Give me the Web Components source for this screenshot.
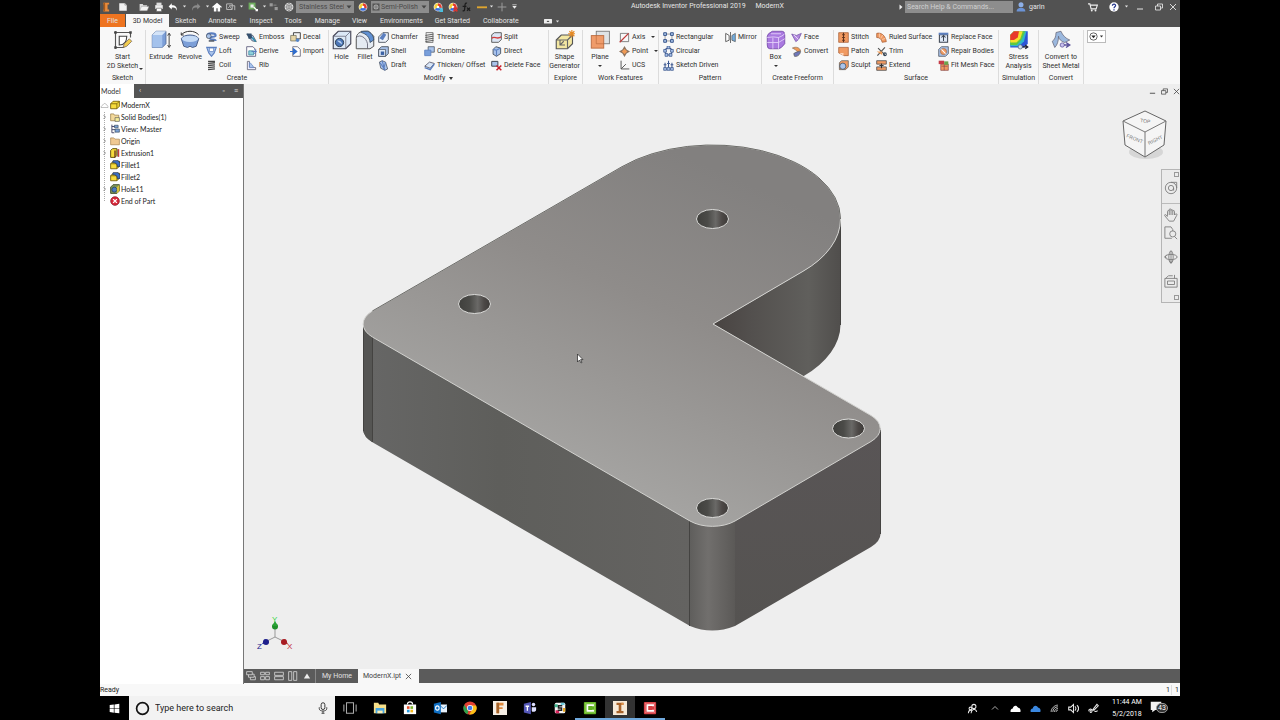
<!DOCTYPE html>
<html lang="en">
<head>
<meta charset="utf-8">
<title>Autodesk Inventor Professional 2019 - ModernX</title>
<style>
body{margin:0;background:#000;font-family:Roboto,"Noto Sans",sans-serif;font-size:7px;line-height:10px;color:#333}
</style>
</head>
<body>
<inventor-app></inventor-app>
<script>
/* Icon library: every drawing sits on a 16 by 16 grid. */
const B='#5b7fc0', L='#a9c3ea', K='#3c4450', O='#f09a62';
const wheel='<circle cx="8" cy="8" r="7" fill="#eee"/><path d="M8 8V2a6 6 0 0 1 5.2 9z" fill="#e33b2e"/><path d="M8 8l5.2 3a6 6 0 0 1-10.4 0z" fill="#3b6fe0"/><path d="M8 8L2.800 11A6 6 0 0 1 8 2z" fill="#f4cf3a"/><circle cx="8" cy="8" r="2" fill="#fff"/>';
const cubeY='<path d="M1 6l4-4h10v8l-4 4H1z" fill="#f7dc3c" stroke="#6b5600" stroke-width="1.300"/><path d="M1 6h10v8M11 6l4-4" fill="none" stroke="#6b5600" stroke-width="1.200"/>';
const cam=(c,a)=>`<rect x="1" y="1" width="14" height="14" rx="1" fill="${c}"/><rect x="2.500" y="2.500" width="11" height="11" fill="none" stroke="${a}" stroke-width=".8"/><path d="M11.500 6V4.800H5v6.400h6.500V10" fill="none" stroke="#fff" stroke-width="2"/>`;
const ICONS={
inv:'<path d="M4 1h9v3h-2.500v8H13v3H4v-3h2.500V4H4z" fill="#e98a3a"/><path d="M4 1h2.500v14H4z" fill="#a55a1d"/>',
file:'<path d="M2 2h9l3 3v9H2z" fill="#f2f2f2"/><path d="M11 2v3h3" fill="none" stroke="#888"/>',
open:'<path d="M1 13V3h5l1 2h6v2" fill="#ddd"/><path d="M4 7h12l-3 7H1z" fill="#f4f4f4" stroke="#888" stroke-width=".6"/>',
save:'<path d="M4 1h8v4H4z" fill="#ddd"/><rect x="2" y="5" width="12" height="6" fill="#eee"/><path d="M4 10h8v5H4z" fill="#fff" stroke="#666"/>',
undo:'<path d="M6 2L1 7l5 5V9c5-1 7 1 8 5 1-6-2-9-8-9z" fill="#fff"/>',
redo:'<path d="M10 2l5 5-5 5V9C5 8 3 10 2 14 1 8 4 5 10 5z" fill="#8b8b8b"/>',
home:'<path d="M8 1L0 8l1.500 1L3 8v7h4v-5h2v5h4V8l1.500 1L16 8z" fill="#fff"/>',
snap:'<path d="M1 3h9v9H1zM5 6h9v7" fill="none" stroke="#bbb" stroke-width="1.500"/><path d="M3 10l3-3 3 4" stroke="#ddd" fill="none"/>',
upd:'<rect x="1" y="1" width="11" height="11" fill="#6fae5f"/><rect x="4" y="4" width="5" height="5" fill="#eee"/><path d="M9 8l6 6M12 14h3v-3" stroke="#fff" stroke-width="1.800" fill="none"/>',
sel:'<rect x="1" y="2" width="5" height="5" fill="#9a9a9a"/><rect x="9" y="8" width="5" height="5" fill="#9a9a9a"/><path d="M7 5h5" stroke="#aaa"/>',
globe:'<circle cx="8" cy="8" r="7" fill="#e8e8e8"/><path d="M1 8h14M8 1v14M3 4c3 2 7 2 10 0M3 12c3-2 7-2 10 0M8 1C3 5 3 11 8 15c5-4 5-10 0-14" fill="none" stroke="#666" stroke-width=".9"/>',
wheel, wheela:wheel+'<path d="M10 9l5 5M15 10v5h-5" stroke="#4ac0e0" stroke-width="2.500" fill="none"/>',
wheelx:wheel+'<path d="M9 9l6 6M15 9l-6 6" stroke="#d8322c" stroke-width="2.500"/>',
fx:'<path d="M8 2c-4-2-3 5-4 11-1 2-2 1-3 1M1 7h6M8 9l5 5M13 9l-5 5" fill="none" stroke="#1c1c1c" stroke-width="2"/>',
dash:'<path d="M0 7h16v3H0z" fill="#dfa52f"/>', plus:'<path d="M8 1v14M1 8h14" stroke="#9a9a9a" stroke-width="1.600"/>',
cust:'<path d="M3 4h10" stroke="#eee" stroke-width="1.500"/><path d="M3 7h10l-5 6z" fill="#eee"/>',
tri:'<path d="M3 5h10l-5 6z" fill="currentColor"/>', play:'<path d="M4 1l8 7-8 7z" fill="#eee"/>',
swatch:'<rect x="1" y="1" width="14" height="14" fill="#555"/><circle cx="8" cy="8" r="5" fill="#aaa"/><path d="M4 8h8M8 4v8" stroke="#555"/>',
user:'<circle cx="8" cy="4.500" r="4" fill="#8db0e8"/><path d="M1 15c0-4 3-6 7-6s7 2 7 6z" fill="#6b93d6"/>',
cart:'<path d="M0 3h3l2 8h8l2-6H4" fill="none" stroke="#eee" stroke-width="1.800"/><circle cx="6" cy="13.500" r="1.500" fill="#eee"/><circle cx="12" cy="13.500" r="1.500" fill="#eee"/>',
help:'<circle cx="8" cy="8" r="7.500" fill="#fff"/><path d="M5.500 6c0-4 5.500-3 5 0-.3 1.800-2.500 1.800-2.500 4M8 11.500v2" fill="none" stroke="#23358c" stroke-width="2"/>',
min:'<path d="M2 12h12" stroke="currentColor" stroke-width="2"/>', rest:'<path d="M1 6h10v8H1zM5 6V2h10v8h-4" fill="none" stroke="currentColor" stroke-width="1.700"/>',
close:'<path d="M2 2l12 12M14 2L2 14" stroke="currentColor" stroke-width="1.800"/>',
media:'<rect x="0" y="4" width="16" height="9" rx="1" fill="#eee"/><path d="M5 10l3-3 3 3z" fill="#444"/>',
/* ribbon, large */
sketch:'<path d="M2 1v14M1 2h13M14 2v4M2 14h7" fill="none" stroke="#555" stroke-width=".9"/><path d="M1 1h2v2H1zM13 1h2v2h-2zM1 13h2v2H1z" fill="#444"/><path d="M5 5h6c0 4-2 7-6 7z" fill="#fff" stroke="#444" stroke-width=".9"/><path d="M8 14l1-3 4-4 2 2-4 4z" fill="#f1cc4e" stroke="#776655" stroke-width=".6"/>',
extrude:'<path d="M1 4l3-3h8v10l-3 3H1z" fill="#7c9fd8" stroke="#4c648f" stroke-width=".6"/><path d="M1 4h8v10H1z" fill="#a4c2ec"/><path d="M1 4l3-3h8L9 4z" fill="#d4e4f8"/><path d="M14.500 3v10M13.300 4.500l1.200-2 1.200 2M13.300 12l1.200 2 1.200-2" stroke="#333" stroke-width=".7" fill="none"/>',
revolve:'<path d="M1 7c2-4 12-4 14 0l-2 6-3 1-2-1-2 1-3-1z" fill="#7c9fd8" stroke="#40557e" stroke-width=".7"/><ellipse cx="8" cy="7" rx="6.500" ry="2.500" fill="#c4daf5"/><path d="M1 4c3-4 11-4 14 0M1 4V2M1 4h2" fill="none" stroke="#333" stroke-width=".8"/>',
hole:'<path d="M1 5l4-4h10v10l-4 4H1z" fill="#dce8f6" stroke="#444455" stroke-width=".9"/><path d="M1 5h10v10M11 5l4-4" fill="none" stroke="#666677" stroke-width=".6"/><circle cx="6" cy="10" r="3.300" fill="#4d77b8" stroke="#223344" stroke-width=".7"/><path d="M4 8.500a3 3 0 0 1 4 3z" fill="#bcd4f2"/>',
fillet:'<path d="M1 15V7c0-4 3-6 7-6h3l4 4v8l-3 2z" fill="#e4eaf2" stroke="#555" stroke-width=".8"/><path d="M5 1h5c3 1 5 4 5 7l-3 2C12 6 9 3 5 2z" fill="#5f8fd2" stroke="#334455" stroke-width=".6"/><path d="M1 6c3-3 8 0 9 5v4" fill="none" stroke="#666677" stroke-width=".7"/>',
shape:'<path d="M1 8l4-4h9v7l-4 4H1z" fill="#f3e7a2" stroke="#555" stroke-width=".9"/><path d="M1 8h9v7M10 8l4-4M4 8v4h4M4 12l3-3" fill="none" stroke="#666" stroke-width=".9"/><path d="M13.500 0v6M10.500 3h6M11.500 1l4 4M15.500 1l-4 4" stroke="#e58a24" stroke-width=".9"/>',
plane:'<rect x="5" y="1" width="10.500" height="10" fill="#dfe3e6" stroke="#777" stroke-width=".7"/><rect x="1" y="4.500" width="10" height="10" fill="#ef9b6a" stroke="#b8683c" stroke-width=".7"/><path d="M5 4.500V11h6" fill="none" stroke="#b8683c" stroke-width=".5"/>',
box:'<path d="M1 5q0-2 4-4h8q2 0 2 3v7q-3 4-5 4H3q-2 0-2-3z" fill="#aa79e0" stroke="#6b42a0" stroke-width=".6"/><path d="M1 6q5-1 9 0 3-1 5-3M10 6v9M1 10h9l5-3M5.500 6v9M4 3h8" stroke="#e4d0fa" stroke-width=".7" fill="none"/>',
metal:'<path d="M1 9C3 8 4 5 4 2l4-1c1 3 4 6 7 7l-4 2C8 9 6 7 6 5c0 4-1 7-3 9z" fill="#9bb8de" stroke="#666677" stroke-width=".6"/><path d="M8 12h6M12 10l3 2-3 2" stroke="#59509a" stroke-width="1.200" fill="none"/><circle cx="9" cy="12" r="1.700" fill="#c9c1ee" stroke="#59509a" stroke-width=".6"/>',
stress:'<path d="M1 4l3-3h11v10l-3 3H1z" fill="#2d55d6"/><path d="M1 4l3-3h10l-2 8-4 4H1z" fill="#2fb7c9"/><path d="M1 4l3-3h9l-3 7-4 4H1z" fill="#5fc940"/><path d="M1 4l3-3h7L9 7l-3 3H1z" fill="#f5e12c"/><path d="M1 4l3-3h4L7 6 4 8H1z" fill="#e8392c"/><path d="M10 13.500h5M13 12l2 1.500-2 1.500" stroke="#222233" fill="none"/><circle cx="9" cy="13.500" r="1.700" fill="#ccddee" stroke="#556677" stroke-width=".6"/>',
/* ribbon, small */
sweep:`<path d="M2 5c0-4 12-4 12 0 0 3-8 1-8 4s8 1 8 4" fill="none" stroke="${B}" stroke-width="3"/><circle cx="4" cy="6" r="3.500" fill="${L}" stroke="${K}"/><path d="M4 13h8" stroke="${K}" stroke-width="2"/>`,
loft:`<path d="M1 2h14l-3 8-4 5-4-5z" fill="${L}" stroke="${B}" stroke-width="1.500"/><path d="M5 3h6v5H5z" fill="#fff" stroke="${B}"/>`,
coil:'<path d="M3 2h10M3 5l10-1M3 8l10-1M3 11l10-1M3 14l10-1" stroke="#444" stroke-width="2"/>',
emboss:`<path d="M1 3l9 2 5 9-6-1z" fill="${L}" stroke="${K}"/><path d="M1 2h7l1 7-5 1z" fill="#35506e"/><path d="M9 8l5 6" stroke="#2a8cab" stroke-width="2"/>`,
derive:`<path d="M1 1h9l4 4v10H1z" fill="#fff" stroke="#555577" stroke-width="1.200"/><path d="M4 7h7v6H4z" fill="#8ed0da" stroke="#2b7b98"/><path d="M8 8h7M12 5l3 3-3 3" fill="none" stroke="${B}" stroke-width="1.500"/>`,
rib:`<path d="M2 2h3v8l9 1v3H2z" fill="#eeeeff" stroke="#666677" stroke-width="1.200"/><path d="M5 4c3 1 5 4 6 7H5z" fill="${L}" stroke="${B}"/>`,
decal:'<path d="M5 1h10v9H5z" fill="#f3f3f3" stroke="#444" stroke-width="1.400"/><path d="M1 5h8v8H1z" fill="#e6d5a5" stroke="#666655"/><circle cx="11" cy="12" r="2.500" fill="#5485c8"/>',
import:'<path d="M4 1h7l4 4v10H4z" fill="#fff" stroke="#666677" stroke-width="1.200"/><path d="M0 8h8M5 4l5 4-5 4z" fill="#2f6ccc" stroke="#2f6ccc" stroke-width="1.500"/>',
chamfer:`<path d="M1 7l6-6h8v10l-4 4H1z" fill="#eef3fa" stroke="${K}" stroke-width="1.200"/><path d="M2 9l6-8 4 3-5 8z" fill="${B}"/>`,
shell:`<path d="M1 5l4-4h10v10l-4 4H1z" fill="${L}" stroke="${K}" stroke-width="1.200"/><path d="M1 5h10v10H1z" fill="#dfe9f7" stroke="${K}"/><path d="M4 8h5v5H4z" fill="#3b62a5"/>`,
draft:`<path d="M2 3l4-2 5 2 3 10-4 2-6-3z" fill="${L}" stroke="${K}"/><path d="M6 1l4 14M3 4l7 10M11 3l-3 11" stroke="${B}" stroke-width="1.500"/>`,
thread:'<rect x="3" y="1" width="10" height="14" fill="#eee" stroke="#555"/><path d="M2 5l12-2M2 8l12-2M2 11l12-2M2 14l12-2" stroke="#555" stroke-width="1.300"/>',
combine:`<path d="M6 1h9v8H6z" fill="${L}" stroke="${K}"/><path d="M1 6h9v8H1z" fill="#789fdb" stroke="${B}" stroke-width="1.200"/>`,
thicken:`<path d="M1 9l7-6 7 2-6 7z" fill="#d8e6f8" stroke="#555566" stroke-width="1.200"/><path d="M1 11l8 3 6-8" fill="none" stroke="${B}" stroke-width="2"/>`,
split:'<path d="M1 4l4-3h10v10l-4 4H1z" fill="#dce6f4" stroke="#444" stroke-width="1.200"/><path d="M1 9c5-4 7 3 14-2" fill="none" stroke="#d33b3b" stroke-width="2"/>',
direct:`<path d="M3 5l4-4 7 2v8l-6 4-5-3z" fill="${L}" stroke="${K}" stroke-width="1.200"/><path d="M8 5v9M3 5l5 1 6-3" stroke="${B}" fill="none" stroke-width="1.500"/>`,
delface:`<path d="M1 2h9v7H1z" fill="${L}" stroke="${K}" stroke-width="1.400"/><path d="M8 8l7 7M15 8l-7 7" stroke="#c81f2b" stroke-width="2.200"/>`,
axis:'<path d="M2 2h12v12H2z" fill="none" stroke="#555"/><path d="M1 15L14 2" stroke="#c03a3a" stroke-width="1.800"/>',
point:'<path d="M8 0l3 5 5 3-5 3-3 5-3-5-5-3 5-3z" fill="#8d735f"/><path d="M8 4l4 4-4 4-4-4z" fill="#ef9a55"/>',
ucs:'<path d="M3 1v12h12M3 13l7-7" fill="none" stroke="#555" stroke-width="1.400"/>',
rect:`<path d="M3 3h10v10H3z" fill="none" stroke="#777"/><path d="M1 1h4v4H1zM11 1h4v4h-4zM1 11h4v4H1zM11 11h4v4h-4z" fill="${L}" stroke="#2e4c84" stroke-width="1.300"/>`,
circ:`<circle cx="8" cy="8" r="5" fill="none" stroke="#3b5790" stroke-width="1.500"/><path d="M6 0h4v4H6zM1 5h4v4H1zM11 5h4v4h-4zM3 11h4v4H3zM9 11h4v4H9z" fill="${L}" stroke="#2e4c84"/>`,
skd:`<path d="M3 4v8M8 1v10M13 4v8M1 7h4M6 5h4M11 7h4" stroke="#3b5790" stroke-width="1.500"/><path d="M1 11h4v4H1zM6 11h4v4H6zM11 11h4v4h-4z" fill="${L}" stroke="#2e4c84"/>`,
mirror:'<path d="M1 2l5 3v7l-5 2z" fill="#fff" stroke="#555" stroke-width="1.300"/><path d="M15 2l-5 3v7l5 2z" fill="#74aee0" stroke="#555"/><path d="M8 0v16" stroke="#333"/>',
face:'<path d="M1 3l7 2 7-3-4 9-4 3z" fill="#b48ae0" stroke="#6b4aa0"/><path d="M4 4l7 7" stroke="#fff"/>',
conv:'<path d="M2 3c6-3 11 0 12 4l-5 1-3-3z" fill="#ef9a55" stroke="#8a6a55"/><path d="M4 11c4-3 8-3 10-3-1 5-5 8-9 7z" fill="#6f77b9" stroke="#555"/>',
stitch:`<path d="M1 1h14v14H1z" fill="${O}" stroke="#a0542c"/><path d="M8 1v14M6 4h4M6 8h4M6 12h4" stroke="#5d321c" stroke-width="1.500"/>`,
patch:`<path d="M1 2h14v12h-6L1 10z" fill="${O}" stroke="#a0542c"/><path d="M2 10l6 0v4" fill="#fbd6bd"/>`,
sculpt:`<path d="M2 4l3-3h10v9l-4 4H2z" fill="${O}" stroke="#555"/><circle cx="7" cy="9" r="4.500" fill="${L}" stroke="#334455"/>`,
ruled:`<path d="M1 2c7-2 13 4 14 12l-6 1C8 10 5 8 1 8z" fill="${O}" stroke="#a0542c"/><path d="M5 2v6M10 4l-3 5M14 9l-5 2" stroke="#fbd6bd"/>`,
trim:'<path d="M2 14L13 2M3 3l10 10" stroke="#555" stroke-width="1.700"/><path d="M1 8h8v5z" fill="#ef9a55"/><circle cx="13" cy="12" r="2" fill="none" stroke="#334455" stroke-width="1.500"/>',
extend:`<path d="M1 1h14v5H1zM1 10h14v5H1z" fill="${O}" stroke="#555" stroke-width="1.200"/><path d="M8 5v7M5 8h6" stroke="#333" stroke-width="1.500"/>`,
repface:`<path d="M2 4h12v11H2z" fill="#dfe9f7" stroke="${K}" stroke-width="1.500"/><path d="M1 1h14v3H1z" fill="${B}"/><path d="M8 6v7M5 8l3-3 3 3" fill="none" stroke="${K}" stroke-width="1.500"/>`,
repbody:`<path d="M1 5l4-4h10v10l-4 4H1z" fill="${L}" stroke="${K}"/><circle cx="8" cy="8" r="4.500" fill="${O}" stroke="#996644"/><path d="M5 5l6 6" stroke="#fff" stroke-width="1.500"/>`,
fit:`<path d="M4 6h11v9H4z" fill="${O}" stroke="#884444"/><path d="M1 1h8v5H1z" fill="#c63c48"/><path d="M9 2h6v5H9z" fill="#6aa34b"/><path d="M5 9h9M9 7v8" stroke="#884444"/>`,
down:'<circle cx="8" cy="8" r="6.500" fill="none" stroke="#333" stroke-width="1.300"/><path d="M4 6h8l-4 5z" fill="#222"/>',
/* browser */
cloud:'<path d="M1 13c0-3 2-4 4-5 2-5 6-3 7 0 3 1 3 3 3 5z" fill="#fff" stroke="#888"/>',
cubey:cubeY, solids:'<path d="M1 3h5l1 2h7v9H1z" fill="#f3d99b" stroke="#8a6c30"/><path d="M8 9h7v6H8z" fill="#f7ee9a" stroke="#555"/>',
view:'<path d="M3 1v13M3 4h5M3 9h5M3 14h4" stroke="#444466" stroke-width="1.500"/><path d="M7 2h6v4H7zM8 8h7v5H8z" fill="#7aa2d8" stroke="#334455"/>',
folder:'<path d="M1 3h5l2 2h7v9H1z" fill="#f0c993" stroke="#a07840"/>',
extr:'<path d="M1 4l3-3h7v11l-3 3H1z" fill="#f7dc3c" stroke="#554400" stroke-width="1.400"/><path d="M8 4v11M13 2v12" stroke="#5b2a20" stroke-width="2"/><path d="M14 2v12" stroke="#dd3333" stroke-width="1.500"/>',
fillt:cubeY+'<path d="M5 1h8l3 4v5l-4 1C12 6 9 4 4 4z" fill="#3d6fc2" stroke="#1c2a4c"/>',
holet:'<path d="M1 5l4-4h10v10l-4 4H1z" fill="#7e965b" stroke="#32401c" stroke-width="1.300"/><circle cx="7" cy="9" r="4" fill="#487bc0" stroke="#1b3050"/><path d="M11 5l4-4v10l-4 4z" fill="#d6c13a"/>',
end:'<circle cx="8" cy="8" r="7" fill="#d8283a" stroke="#7c1420"/><path d="M5 5l6 6M11 5l-6 6" stroke="#fff" stroke-width="2.200"/>',
chev:'<path d="M6 4l4 4-4 4" fill="none" stroke="#777" stroke-width="1.500"/>',
/* navigation bar */
steer:'<circle cx="8" cy="8" r="6.500"/><circle cx="8" cy="8" r="3"/><path d="M8 1.500h6.500V8M11 8v3"/>',
pan:'<path d="M4 9V4c0-1.500 2-1.500 2 0V2c0-1.500 2-1.500 2 0v1c0-1.500 2-1.500 2 0v1c0-1.500 2-1.500 2 0v4l1-1c1-1 2.500 0 1.500 1.500L11 15H6L1 9c-1-1.500 1-2 1.500-1L4 10M6 4v4M8 3v5M10 4v4"/>',
zoomi:'<path d="M1 1h7l2 3v2M1 1v13h8"/><circle cx="10" cy="9" r="3.500"/><path d="M12 12l3 3"/>',
orbit:'<ellipse cx="8" cy="8" rx="7" ry="3"/><ellipse cx="8" cy="8" rx="2.500" ry="7"/><path d="M8 1v14M6 12l2 3 2-3M3 9l-2-1 2-2"/>',
look:'<path d="M1 5h14v10H1zM4 8h8v4H4zM2 5l3-3h5M12 1v4"/>',
/* document bar */
cas:'<path d="M1 1h9v5H1zM4 6v4h9V5h-3M7 10v4h8V9h-2" />', grid:'<path d="M1 2h6v4H1zM9 2h6v4H9zM1 9h6v5H1zM9 9h6v5H9z"/>',
rows:'<path d="M1 2h14v5H1zM1 9h14v5H1z"/>', cols:'<path d="M1 1h5v14H1zM9 1h5v14H9z"/>', up:'<path d="M3 12h10L8 4z" fill="#eee" stroke="none"/>',
/* taskbar */
win:'<path d="M1 3l6-1v5.500H1zM8 2l7-1v6.500H8zM1 8.500h6V14l-6-1zM8 8.500h7V15l-7-1z" fill="#fff"/>',
ring:'<circle cx="8" cy="8" r="6.300" fill="none" stroke="#111" stroke-width="1.800"/>',
mic:'<rect x="5.500" y="1" width="5" height="9" rx="2.500" fill="none" stroke="#333" stroke-width="1.300"/><path d="M3 7v2c0 4 10 4 10 0V7M8 12v3M6 15h4" fill="none" stroke="#333" stroke-width="1.200"/>',
task:'<path d="M4 2h8v12H4zM1 4v8M15 4v8" fill="none" stroke="#aaa" stroke-width="1.200"/>',
expl:'<path d="M1 2h5l1 2h8v10H1z" fill="#f7e08a"/><path d="M3 8h10v6H3z" fill="#49a7e3"/><path d="M5 11h6v3H5z" fill="#fbeeb4"/>',
store:'<path d="M5 4c0-4 6-4 6 0" fill="none" stroke="#fff" stroke-width="1.300"/><path d="M1 4h14v11H1z" fill="#fff"/><path d="M4.500 6h3v3h-3z" fill="#e6502c"/><path d="M8.500 6h3v3h-3z" fill="#7cb32d"/><path d="M4.500 10h3v3h-3z" fill="#2a9de0"/><path d="M8.500 10h3v3h-3z" fill="#f5b91d"/>',
outl:'<path d="M8 4h8v9H8z" fill="#e7f1fb"/><path d="M8 5l4 4 4-4" fill="none" stroke="#1670bd"/><path d="M1 3l8-2v14l-8-2z" fill="#0f6fc4"/><ellipse cx="5" cy="8" rx="2" ry="2.500" fill="none" stroke="#fff" stroke-width="1.300"/>',
chrome:'<circle cx="8" cy="8" r="7.500" fill="#e34133"/><path d="M1.500 4.300L6 12l-1 3A7.500 7.500 0 0 1 1.500 4.300z" fill="#2ba24c"/><path d="M15 5a7.500 7.500 0 0 1-8 10.400L11 9l-1-4z" fill="#fbc116"/><circle cx="8" cy="8" r="3.500" fill="#fff"/><circle cx="8" cy="8" r="2.700" fill="#3f7de8"/>',
fusion:'<rect x="0" y="0" width="16" height="16" fill="#f5eee5"/><path d="M4 2h8v3H7v2h4v2H7v5H4z" fill="#e08a3e"/><path d="M4 2h3v12H4z" fill="#a4632b"/>',
teams:'<path d="M1 3l8-2v14l-8-2z" fill="#5558b8"/><path d="M3 6h4M5 6v5" stroke="#fff" stroke-width="1.500"/><circle cx="12" cy="4" r="2" fill="#dfe0ff"/><path d="M10 7h5v3c0 3-5 3-5 1z" fill="#dfe0ff"/>',
slack:'<rect x="1" y="1" width="14" height="14" rx="2" fill="#f4f4f4"/><path d="M1 3h4v4H1z" fill="#3eb890"/><path d="M9 1h5v3H9z" fill="#6ecadc"/><path d="M12 8h3v5h-3z" fill="#e9a820"/><path d="M2 11h5v4H2z" fill="#d9245c"/><path d="M11 5H6v3h4v3H5" fill="none" stroke="#222" stroke-width="2"/>',
camg:cam('#5faf1f','#9ad85f'), camr:cam('#d43a3f','#f0868a'),
invt:'<rect width="16" height="16" fill="#f7ead8"/><path d="M4 2h8v2.500h-2.500v7H12V14H4v-2.500h2.500v-7H4z" fill="#a8632b"/><path d="M9.500 2H12v2.500H9.500z" fill="#e4954c"/>',
people:'<circle cx="10" cy="5" r="3"/><path d="M2 15c0-3 2-5 5-5M6 15c0-4 3-6 5-6 2 1 3 2 3 4"/><circle cx="5" cy="8" r="2"/>',
caret:'<path d="M2 11l6-6 6 6"/>', cloudw:'<path d="M1 13c-1-3 1-5 3-5 1-5 6-5 8-1 3 0 4 4 3 6z" fill="#fff" stroke="none"/>',
cloudb:'<path d="M1 13c-1-3 1-5 3-5 1-5 6-5 8-1 3 0 4 4 3 6z" fill="#3b88e0" stroke="none"/>',
wifi:'<path d="M2 14C2 8 8 2 14 2M5 14c0-5 4-9 9-9M8 14c0-3 3-6 6-6M11 14c0-2 1-3 3-3"/>',
vol:'<path d="M1 6h3l4-4v12l-4-4H1zM10 5c2 2 2 4 0 6M13 3c3 3 3 7 0 10"/>',
pen:'<path d="M9 7l4-5 2 2-5 5-3 1zM1 12c0-4 5-4 5-1s-3 4-3 1 4-3 7 0c2 1 3 0 4-1"/>',
note:'<path d="M1 1h14v11H7l-4 3v-3H1z" fill="#f2f2f2"/>'
};
const group=(names,attrs)=>{for(const n of names)ICONS[n]=`<g fill="none" ${attrs}>${ICONS[n]}</g>`};
group(['steer','pan','zoomi','orbit','look'],'stroke="#7b7b7b"');
group(['cas','grid','rows','cols','up'],'stroke="#d8d8d8" stroke-width="1.300"');
group(['people','caret','wifi','vol','pen','cloudw','cloudb'],'stroke="#e6e6e6" stroke-width="1.500"');

/* Registers an element from its template; setup fills the clone before it is attached. */
function define(name,html,setup){
  const t=document.createElement('template');t.innerHTML=html;
  customElements.define(name,class extends HTMLElement{
    connectedCallback(){
      if(this.shadowRoot)return;
      const c=t.content.cloneNode(true);
      if(setup)setup(this,c);
      this.attachShadow({mode:'open'}).append(c);
    }
  });
}
define('ui-icon','<style>:host{display:block;flex:none;width:var(--icon,10px);height:var(--icon,10px)}svg{display:block;width:100%;height:100%}</style><svg viewBox="0 0 16 16" aria-hidden="true"></svg>',
  (h,r)=>{r.querySelector('svg').innerHTML=ICONS[h.getAttribute('name')]||''});

const BTN='button{font:inherit;color:inherit;background:none;border:0;padding:0;margin:0;white-space:nowrap}';
/* Icon-only button; size and width come from custom properties. */
define('icon-button',`<style>:host{display:block;flex:none}${BTN}button{display:flex;align-items:center;justify-content:center;width:var(--cell,15px);height:100%}</style><button><ui-icon></ui-icon></button>`,
  (h,r)=>{r.querySelector('ui-icon').setAttribute('name',h.getAttribute('icon'));r.querySelector('button').setAttribute('aria-label',h.getAttribute('hint')||h.getAttribute('icon'))});
define('tool-large',`<style>:host{display:block}${BTN}button{display:flex;flex-direction:column;align-items:center;width:100%;--icon:20px;line-height:9px;position:relative}span{display:block;text-align:center;margin-top:3px}
:host([drop]) button{padding-bottom:6px}:host([drop]) button::after,:host([side]) button::after{content:"";position:absolute;bottom:1px;border:2px solid transparent;border-top-color:#333;border-bottom:0}:host([side]) button::after{right:2px}</style><button><ui-icon></ui-icon><span><slot></slot></span></button>`,
  (h,r)=>r.querySelector('ui-icon').setAttribute('name',h.getAttribute('icon')));
define('tool-small',`<style>:host{display:block;height:14px;padding-left:2px}${BTN}button{display:flex;align-items:center;gap:2px;height:14px;--icon:11px}:host([drop]) button::after{content:"";margin-left:4px;border:2px solid transparent;border-top-color:#333;border-bottom:0}</style><button><ui-icon></ui-icon><slot></slot></button>`,
  (h,r)=>r.querySelector('ui-icon').setAttribute('name',h.getAttribute('icon')));
define('ribbon-panel',`<style>:host{display:flex;flex-direction:column;box-sizing:border-box;border-right:1px solid #dcdcdc;flex:none}
.b{display:grid;grid-template-columns:var(--cols);height:42px;grid-auto-flow:column;grid-template-rows:14px 14px 14px;padding-left:var(--lead,0px)}::slotted(tool-large){grid-row:1/4}
h2{margin:0;font:inherit;line-height:12px;text-align:center;white-space:nowrap}:host([drop]) h2::after{content:"";display:inline-block;vertical-align:middle;margin-left:4px;border:2px solid transparent;border-top:3px solid #333;border-bottom:0}</style><div class="b"><slot></slot></div><h2></h2>`,
  (h,r)=>r.querySelector('h2').textContent=h.getAttribute('label'));

define('title-bar',`<style>
:host{display:grid;grid-template-columns:auto 1fr auto;height:13px;background:#525252;color:#e6e6e6}
.q,.r{display:flex;align-items:center;--icon:10px}.q{width:421px}
.q icon-button{height:12px}.d{width:5px;--cell:5px;--icon:5px}
select{appearance:none;font:inherit;color:#4a4a4a;background:#8d8d8d;border:0;height:12px;margin:0;min-width:0;width:100%;text-overflow:clip;padding:0 10px 0 3px}
label{display:block;position:relative;width:58px;height:12px;overflow:hidden;margin:0 1px 0 0}label.s select{padding-left:10px}
label ui-icon{position:absolute;top:2px;--icon:8px}label ui-icon.a{right:1px;color:#444}label ui-icon.w{left:1px}
h1{margin:0 0 0 110px;font:inherit;line-height:13px;white-space:nowrap}h1 span{margin-left:8px}
.r input{font:inherit;box-sizing:border-box;width:108px;height:12px;border:0;padding:0 2px;background:#8d8d8d;color:#ddd}.r input::placeholder{color:#d0d0d0;opacity:1}
.u{display:flex;align-items:center;width:66px;gap:3px;padding-left:3px}
</style>
<nav class="q" aria-label="Quick access">
<icon-button icon="inv" style="--cell:12px"></icon-button><icon-button icon="file" style="--cell:22px"></icon-button>
<icon-button icon="open" style="--cell:20px"></icon-button><icon-button icon="save" style="--cell:10px"></icon-button>
<icon-button icon="undo" style="--cell:18px"></icon-button><icon-button icon="tri" class="d"></icon-button>
<icon-button icon="redo" style="--cell:18px"></icon-button><icon-button icon="tri" class="d"></icon-button>
<icon-button icon="home" style="--cell:13px"></icon-button><icon-button icon="snap" style="--cell:16px"></icon-button><icon-button icon="tri" class="d"></icon-button>
<icon-button icon="upd" style="--cell:18px"></icon-button><icon-button icon="tri" class="d"></icon-button>
<icon-button icon="sel" style="--cell:14px"></icon-button><icon-button icon="globe" style="--cell:15px"></icon-button>
<label><select aria-label="Material"><option>Stainless Steel</option></select><ui-icon class="a" name="tri"></ui-icon></label>
<icon-button icon="wheel" style="--cell:16px"></icon-button>
<label class="s"><ui-icon class="w" name="swatch"></ui-icon><select aria-label="Appearance"><option>Semi-Polish</option></select><ui-icon class="a" name="tri"></ui-icon></label>
<icon-button icon="wheela" style="--cell:15px"></icon-button><icon-button icon="wheelx" style="--cell:15px"></icon-button><icon-button icon="fx" style="--cell:14px"></icon-button>
<icon-button icon="dash" style="--cell:15px"></icon-button><icon-button icon="tri" class="d"></icon-button><icon-button icon="plus" style="--cell:15px"></icon-button><icon-button icon="cust" style="--icon:7px;--cell:11px"></icon-button>
</nav>
<h1>Autodesk Inventor Professional 2019 <span>ModernX</span></h1>
<div class="r"><icon-button icon="play" hint="Expand" style="--icon:6px;--cell:9px"></icon-button>
<input type="search" aria-label="Search help" placeholder="Search Help &amp; Commands...">
<div class="u"><ui-icon name="user"></ui-icon>garin</div><icon-button icon="cart" style="--cell:22px"></icon-button><icon-button icon="help" style="--cell:20px"></icon-button><icon-button icon="tri" class="d"></icon-button>
<icon-button icon="min" style="--icon:8px;--cell:22px"></icon-button><icon-button icon="rest" style="--icon:8px"></icon-button><icon-button icon="close" style="--icon:8px;--cell:14px"></icon-button></div>`);

define('ribbon-tabs',`<style>:host{display:flex;height:14px;background:#525252;color:#e2e2e2;align-items:flex-end}${BTN}
button{padding:1px 6px 0;line-height:12px}button:nth-of-type(2n+5){padding-left:7px}.f{width:25px;padding:1px 0 0;background:#ee7420;margin-right:1px}.on{background:#f8f8f8;color:#333;width:43px;padding:1px 0 0}
.m{margin-left:16px;--cell:14px;--icon:8px;height:12px}.d{--cell:6px;--icon:5px;height:12px}</style>
<button class="f">File</button><button class="on">3D Model</button><button>Sketch</button><button>Annotate</button><button>Inspect</button><button>Tools</button><button>Manage</button><button>View</button><button>Environments</button><button>Get Started</button><button>Collaborate</button><icon-button class="m" icon="media"></icon-button><icon-button class="d" icon="tri"></icon-button>`);

define('ribbon-bar',`<style>:host{display:flex;height:54px;padding-top:3px;background:#f8f8f8;color:#303030;overflow:hidden}
.x{display:flex;align-items:center;height:13px;width:19px;margin-left:3px;box-sizing:border-box;border:1px solid #bbb;background:#fff;--cell:11px;--icon:9px}.x .t{--cell:5px;--icon:5px}</style>
<ribbon-panel label="Sketch" style="width:46px;--cols:1fr"><tool-large icon="sketch" side>Start<br>2D Sketch</tool-large></ribbon-panel>
<ribbon-panel label="Create" style="width:183px;--cols:30px 28px 40px 44px 38px"><tool-large icon="extrude">Extrude</tool-large><tool-large icon="revolve">Revolve</tool-large>
<tool-small icon="sweep">Sweep</tool-small><tool-small icon="loft">Loft</tool-small><tool-small icon="coil">Coil</tool-small>
<tool-small icon="emboss">Emboss</tool-small><tool-small icon="derive">Derive</tool-small><tool-small icon="rib">Rib</tool-small>
<tool-small icon="decal">Decal</tool-small><tool-small icon="import">Import</tool-small></ribbon-panel>
<ribbon-panel label="Modify" drop style="width:220px;--cols:25px 22px 46px 67px 58px"><tool-large icon="hole">Hole</tool-large><tool-large icon="fillet">Fillet</tool-large>
<tool-small icon="chamfer">Chamfer</tool-small><tool-small icon="shell">Shell</tool-small><tool-small icon="draft">Draft</tool-small>
<tool-small icon="thread">Thread</tool-small><tool-small icon="combine">Combine</tool-small><tool-small icon="thicken">Thicken/ Offset</tool-small>
<tool-small icon="split">Split</tool-small><tool-small icon="direct">Direct</tool-small><tool-small icon="delface">Delete Face</tool-small></ribbon-panel>
<ribbon-panel label="Explore" style="width:34px;--cols:31px"><tool-large icon="shape">Shape<br>Generator</tool-large></ribbon-panel>
<ribbon-panel label="Work Features" style="width:76px;--cols:34px 40px"><tool-large icon="plane" drop>Plane</tool-large>
<tool-small icon="axis" drop>Axis</tool-small><tool-small icon="point" drop>Point</tool-small><tool-small icon="ucs">UCS</tool-small></ribbon-panel>
<ribbon-panel label="Pattern" style="width:103px;--lead:2px;--cols:62px 37px"><tool-small icon="rect">Rectangular</tool-small><tool-small icon="circ">Circular</tool-small><tool-small icon="skd">Sketch Driven</tool-small><tool-small icon="mirror">Mirror</tool-small></ribbon-panel>
<ribbon-panel label="Create Freeform" style="width:72px;--cols:27px 42px"><tool-large icon="box" drop>Box</tool-large><tool-small icon="face">Face</tool-small><tool-small icon="conv">Convert</tool-small></ribbon-panel>
<ribbon-panel label="Surface" style="width:165px;--lead:2px;--cols:38px 62px 60px"><tool-small icon="stitch">Stitch</tool-small><tool-small icon="patch">Patch</tool-small><tool-small icon="sculpt">Sculpt</tool-small>
<tool-small icon="ruled">Ruled Surface</tool-small><tool-small icon="trim">Trim</tool-small><tool-small icon="extend">Extend</tool-small>
<tool-small icon="repface">Replace Face</tool-small><tool-small icon="repbody">Repair Bodies</tool-small><tool-small icon="fit">Fit Mesh Face</tool-small></ribbon-panel>
<ribbon-panel label="Simulation" style="width:40px;--cols:1fr"><tool-large icon="stress">Stress<br>Analysis</tool-large></ribbon-panel>
<ribbon-panel label="Convert" style="width:45px;--cols:1fr"><tool-large icon="metal">Convert to<br>Sheet Metal</tool-large></ribbon-panel>
<div class="x"><icon-button icon="down"></icon-button><icon-button icon="tri" class="t"></icon-button></div>`);

define('tree-row',`<style>:host{display:flex;align-items:center;height:12px;gap:1px;font-family:Lato,sans-serif;color:#222;white-space:nowrap;--icon:10px}.t{--icon:8px;width:9px}</style><ui-icon class="t"></ui-icon><ui-icon class="i"></ui-icon><slot></slot>`,
  (h,r)=>{r.querySelector('.t').setAttribute('name',h.getAttribute('mark')||'');r.querySelector('.i').setAttribute('name',h.getAttribute('icon'))});
define('model-browser',`<style>:host{display:block;background:#fff;border-right:1px solid #777;box-sizing:border-box}
header{display:flex;height:14px;background:#555}b{font-weight:400;font-family:Lato,sans-serif;background:#fff;width:34px;line-height:14px;box-sizing:border-box;padding-left:1px}.h{flex:1;display:flex;align-items:center;color:#ddd;padding:0 5px;gap:9px}.h i{flex:1;font-style:normal}
.l{padding-top:1px;background:repeating-linear-gradient(#aaa 0 1px,#fff 1px 2px) no-repeat 4px 14px/1px 90px}</style>
<header><b>Model</b><div class="h"><i>‹</i><span>▫</span><span>≡</span></div></header>
<div class="l" role="tree" aria-label="Model"><tree-row role="treeitem" mark="cloud" icon="cubey">ModernX</tree-row><tree-row role="treeitem" mark="chev" icon="solids">Solid Bodies(1)</tree-row><tree-row role="treeitem" mark="chev" icon="view">View: Master</tree-row><tree-row role="treeitem" mark="chev" icon="folder">Origin</tree-row><tree-row role="treeitem" mark="chev" icon="extr">Extrusion1</tree-row><tree-row role="treeitem" icon="fillt">Fillet1</tree-row><tree-row role="treeitem" icon="fillt">Fillet2</tree-row><tree-row role="treeitem" mark="chev" icon="holet">Hole11</tree-row><tree-row role="treeitem" icon="end">End of Part</tree-row></div>`);

const hole=(x,y)=>`<ellipse cx="${x}" cy="${y}" rx="16" ry="9.500" fill="url(#ho)" stroke="#dcdcda" stroke-width="1"/>`;
define('model-view',`<style>:host{display:block;position:relative;background:#eee;overflow:hidden;min-height:0}
.scene{display:block;width:100%;height:100%}.scene text{font-family:"Liberation Sans",sans-serif;font-size:8px}
.wc{position:absolute;right:0;top:2px;display:flex;color:#444;--icon:7px;--cell:12px;height:10px;margin-right:-2px}
.cube{position:absolute;right:10px;top:24px;width:50px;height:54px}.cube text{font:5px "Liberation Sans",sans-serif;fill:#777}
nav{position:absolute;right:0;top:85px;width:19px;height:134px;box-sizing:border-box;border:1px solid #b5b5b5;border-right:0;background:#ebebeb;display:flex;flex-direction:column;align-items:center;--icon:14px;--cell:18px;padding-top:9px}
nav icon-button{height:18px}nav hr{width:100%;border:0;border-top:1px solid #bbb;margin:6px 0 2px;height:0}.g2{margin-top:6px}.e{position:absolute;right:1px;width:3px;height:3px;border:1px solid #999}.e1{top:2px}.e2{bottom:2px}</style>
<svg class="scene" viewBox="244 84 936 585" preserveAspectRatio="xMidYMid meet" role="img" aria-label="L-shaped part">
<defs><linearGradient id="tp" gradientUnits="userSpaceOnUse" x1="740" y1="180" x2="610" y2="480"><stop offset="0" stop-color="#82807f"/><stop offset=".45" stop-color="#8f8c8a"/><stop offset="1" stop-color="#a4a3a1"/></linearGradient>
<linearGradient id="lf" gradientUnits="userSpaceOnUse" x1="372" y1="0" x2="690" y2="0"><stop offset="0" stop-color="#666665"/><stop offset=".4" stop-color="#5e5e5b"/><stop offset="1" stop-color="#646361"/></linearGradient>
<linearGradient id="cy"><stop offset="0" stop-color="#5f5e5c"/><stop offset=".4" stop-color="#716f6d"/><stop offset="1" stop-color="#5b5957"/></linearGradient>
<linearGradient id="rt" x1="0" y1="0" x2="0" y2="1"><stop offset="0" stop-color="#595556"/><stop offset="1" stop-color="#555351"/></linearGradient>
<linearGradient id="nk"><stop offset="0" stop-color="#484341"/><stop offset=".3" stop-color="#53504e"/><stop offset=".75" stop-color="#605f5c"/><stop offset="1" stop-color="#504e4c"/></linearGradient>
<linearGradient id="ho"><stop offset="0" stop-color="#3f3f3c"/><stop offset=".35" stop-color="#4b4b48"/><stop offset=".6" stop-color="#6a6967"/><stop offset=".8" stop-color="#4c4846"/><stop offset="1" stop-color="#3d3a38"/></linearGradient></defs>
<path d="M713 324L803 271.300A128 74 0 0 0 840.500 219V324A128 74 0 0 1 803 376.500z" fill="url(#nk)"/>
<path d="M363 324V430Q364 437 372 442L690 626V519L372 335z" fill="url(#lf)"/>
<path d="M363 324V430Q364 437 372 442V335z" fill="#555553"/>
<path d="M690 518V626Q712 635 735 626V518z" fill="url(#cy)"/>
<path d="M735 519V626L871 547Q880.500 541 880.500 534V428L866 440z" fill="url(#rt)"/>
<path d="M372.500 337V442M689.500 520V626M363.500 326V431M880.500 430V534M840.500 219V325" stroke="#444341" fill="none"/>
<path d="M372.400 311L622 166.700A128 74 0 0 1 840.500 219A128 74 0 0 1 803 271.300L713 324L871 415.500A32 18.500 0 0 1 871 441.500L735 521A32 18.500 0 0 1 690 521L372.400 337A32 18.500 0 0 1 372.400 311z" fill="url(#tp)" stroke="#d2d2cf" stroke-width="1"/>
<path d="M372.400 311L622 166.700A128 74 0 0 1 840.500 219" fill="none" stroke="#6d6d6a" stroke-width="1"/>
${hole(712.5,219)}${hole(474.5,304)}${hole(848.5,428.5)}${hole(712.5,508)}
<path d="M577.500 354v8l2-2 1.500 3 1-.6-1.400-2.800h2.400z" fill="#fff" stroke="#222" stroke-width=".7"/>
<path d="M275 628v9M275 637l-10 5M275 637l10 5" stroke="#999" fill="none"/><circle cx="275" cy="626.500" r="3" fill="#1f8f2a"/><path d="M272 626l3-5 3 5z" fill="#2aa336"/><circle cx="266" cy="642" r="3" fill="#1d1f8c"/><path d="M262 644l3-5 4 4z" fill="#1d1f8c"/><circle cx="284" cy="642" r="3" fill="#a81c22"/><path d="M288 644l-3-5-4 4z" fill="#a81c22"/>
<text x="272" y="622" fill="#35d645">Y</text><text x="257" y="649" fill="#20208c">Z</text><text x="287" y="649" fill="#c22a36">X</text></svg>
<svg class="cube" viewBox="0 0 50 54" role="img" aria-label="View cube"><ellipse cx="26" cy="44" rx="17" ry="7" fill="#ccc" opacity=".7"/><path d="M3 13L25 3l21 10-2 24-19 12L5 37z" fill="#f5f5f5" stroke="#666"/><path d="M3 13l22 11 21-11M25 24v25" stroke="#777" fill="none"/><text transform="translate(20 14) rotate(8)">TOP</text><text transform="translate(6 29) rotate(22)">FRONT</text><text transform="translate(29 37) rotate(-26)">RIGHT</text></svg>
<div class="wc"><icon-button icon="min"></icon-button><icon-button icon="rest"></icon-button><icon-button icon="close"></icon-button></div>
<nav aria-label="Navigation"><span class="e e1"></span><icon-button icon="steer"></icon-button><hr><icon-button icon="pan"></icon-button><icon-button icon="zoomi"></icon-button><icon-button class="g2" icon="orbit"></icon-button><icon-button class="g2" icon="look"></icon-button><span class="e e2"></span></nav>`);

define('document-tabs',`<style>:host{display:flex;height:14px;background:#5b5b5b;color:#e0e0e0}${BTN}.i{display:flex;padding-right:1px;--cell:14px;--icon:10px}.i icon-button{height:14px}.h{width:43px;border-left:1px solid #888;box-sizing:border-box}.on{display:flex;align-items:center;background:#f8f8f8;color:#444;width:61px;padding-left:5px;box-sizing:border-box}.on icon-button{--icon:7px;--cell:14px;height:14px}</style>
<div class="i"><icon-button icon="cas"></icon-button><icon-button icon="grid"></icon-button><icon-button icon="rows"></icon-button><icon-button icon="cols"></icon-button><icon-button icon="up"></icon-button></div><button class="h">My Home</button><div class="on"><button>ModernX.ipt</button><icon-button icon="close"></icon-button></div>`);
define('status-bar',`<style>:host{display:flex;justify-content:space-between;align-items:center;height:12px;background:#f8f8f8;color:#222}.n{display:flex}.n span{width:5px;padding-left:3px;border-left:1px solid #ddd}.n span:first-child{border:0}</style><span>Ready</span><div class="n"><span>1</span><span>1</span></div>`);
define('task-bar',`<style>:host{display:flex;height:24px;background:#000;color:#fff;align-items:stretch}
.s{display:flex;align-items:center;width:206px;box-sizing:border-box;background:#f2f2f2;padding:0 6px;gap:4px;--icon:15px}.s input{flex:1;min-width:0;border:0;background:none;font:inherit;font-size:9px;padding:0 0 0 1px}.s input::placeholder{color:#222;opacity:1}.s .m{--icon:12px}
.a{display:flex;flex:1;--cell:30px;--icon:14px}.a icon-button{box-sizing:border-box}.run{box-shadow:inset 0 -2px #6fa8dc}.on{background:#333}
.t{display:flex;align-items:stretch;--icon:11px;--cell:20px}.c{width:46px;text-align:center;line-height:12px}.c div{height:12px}
.n{position:relative;width:30px;--icon:12px;padding-top:5px;box-sizing:border-box}.n b{position:absolute;left:6px;top:7px;font-weight:400;background:#333;border:1px solid #999;border-radius:6px;width:10px;text-align:center;line-height:8px}</style>
<icon-button icon="win" hint="Start" style="--cell:29px;--icon:11px"></icon-button>
<div class="s"><ui-icon name="ring"></ui-icon><input type="search" aria-label="Search Windows" placeholder="Type here to search"><ui-icon class="m" name="mic"></ui-icon></div>
<nav class="a" aria-label="Apps"><icon-button icon="task"></icon-button><icon-button icon="expl"></icon-button><icon-button icon="store"></icon-button><icon-button icon="outl"></icon-button><icon-button icon="chrome"></icon-button><icon-button icon="fusion"></icon-button><icon-button icon="teams"></icon-button><icon-button icon="slack" style="--icon:12px"></icon-button><icon-button class="run" icon="camg"></icon-button><icon-button class="run on" icon="invt"></icon-button><icon-button class="run" icon="camr"></icon-button></nav>
<div class="t"><icon-button icon="people" style="--cell:26px"></icon-button><icon-button icon="caret" style="--icon:8px"></icon-button><icon-button icon="cloudw"></icon-button><icon-button icon="cloudb"></icon-button><icon-button icon="wifi" style="--icon:9px;--cell:18px"></icon-button><icon-button icon="vol"></icon-button><icon-button icon="pen" style="--cell:21px"></icon-button><div class="c"><div>11:44 AM</div><div>5/2/2018</div></div><div class="n"><ui-icon name="note"></ui-icon><b>43</b></div></div>`);

define('inventor-app',`<style>:host{display:grid;grid-template-rows:auto auto auto 1fr auto auto;min-height:100vh;margin:0 100px}
.w{display:grid;grid-template-columns:144px 1fr;min-height:0}.v{display:grid;grid-template-rows:1fr auto;padding-bottom:1px;background:#f8f8f8;min-width:0;min-height:0}</style>
<title-bar></title-bar><ribbon-tabs></ribbon-tabs><ribbon-bar></ribbon-bar>
<main class="w"><model-browser></model-browser><div class="v"><model-view></model-view><document-tabs></document-tabs></div></main>
<status-bar></status-bar><task-bar></task-bar>`);
</script>
</body>
</html>
